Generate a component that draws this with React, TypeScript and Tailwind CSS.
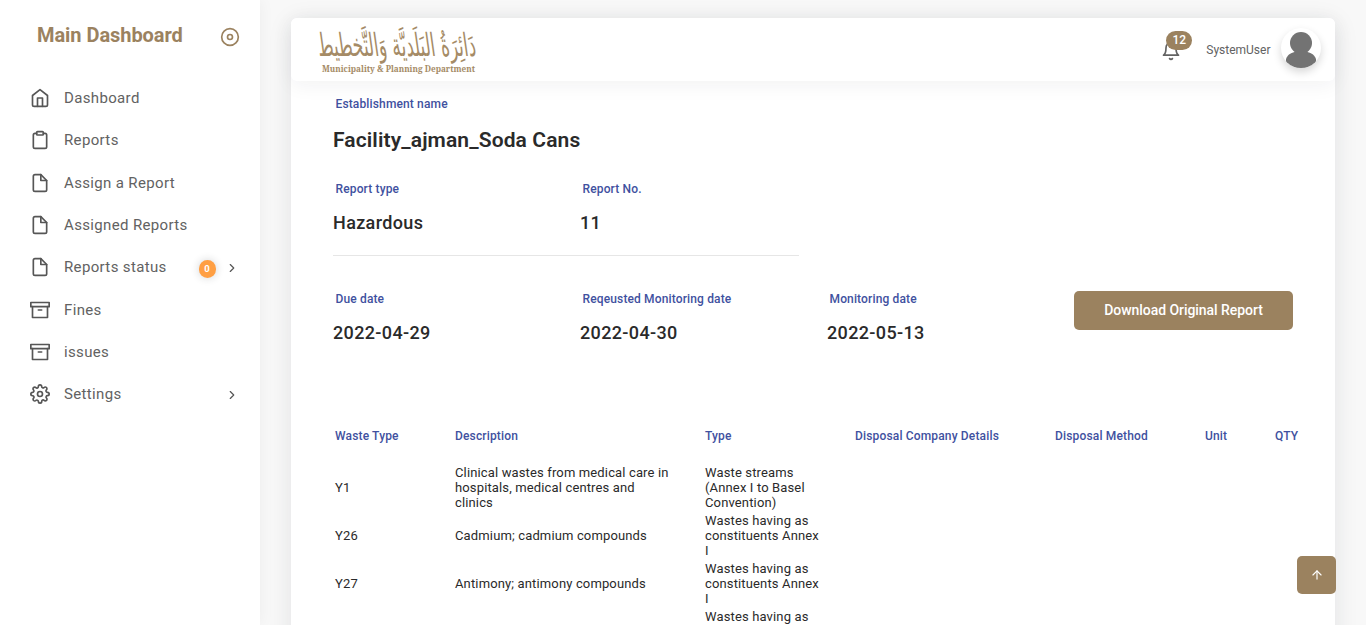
import type { ReactNode } from 'react';
import type { IconType } from 'react-icons';
import { FiArchive, FiArrowUp, FiBell, FiChevronRight, FiClipboard, FiDisc, FiFile, FiHome, FiSettings } from 'react-icons/fi';

type NavItem = { label: string; icon: IconType; badge?: string; expandable?: boolean };

const navItems: NavItem[] = [
  { label: 'Dashboard', icon: FiHome },
  { label: 'Reports', icon: FiClipboard },
  { label: 'Assign a Report', icon: FiFile },
  { label: 'Assigned Reports', icon: FiFile },
  { label: 'Reports status', icon: FiFile, badge: '0', expandable: true },
  { label: 'Fines', icon: FiArchive },
  { label: 'issues', icon: FiArchive },
  { label: 'Settings', icon: FiSettings, expandable: true },
];

const wastes = [
  { code: 'Y1', description: 'Clinical wastes from medical care in hospitals, medical centres and clinics', type: 'Waste streams (Annex I to Basel Convention)' },
  { code: 'Y26', description: 'Cadmium; cadmium compounds', type: 'Wastes having as constituents Annex I' },
  { code: 'Y27', description: 'Antimony; antimony compounds', type: 'Wastes having as constituents Annex I' },
  { code: '', description: '', type: 'Wastes having as constituents Annex I' },
];

const headings = ['Waste Type', 'Description', 'Type', 'Disposal Company Details', 'Disposal Method', 'Unit', 'QTY'];

function Sidebar() {
  return (
    <aside className="w-[260px] shrink-0 bg-white shadow-[0_0_15px_0_rgba(34,41,47,0.05)]">
      <div className="flex h-[77px] items-start justify-between pl-[37px] pr-[20.5px] pt-[23px]">
        <h1 className="text-[20px] font-bold leading-6 tracking-[-0.05px] text-[#9b825f]">Main Dashboard</h1>
        <FiDisc className="mt-1 size-5 text-[#9b825f]" />
      </div>
      <nav className="flex flex-col">
        {navItems.map(({ label, icon: Icon, badge, expandable }) => (
          <a key={label} className="flex h-[42.33px] items-center pl-[30px] pr-[21.5px] text-[#565656]">
            <Icon className="size-5 shrink-0" />
            <span className="ml-[14px] flex-1 text-[15px] leading-5 tracking-[0.35px] text-[#626262]">{label}</span>
            {badge && (
              <span className="mr-[9px] mt-[3px] flex h-[18px] w-[17px] items-center justify-center rounded-full bg-[#ff9f43] text-[9.5px] font-bold text-white shadow-[0_0_8px_rgba(34,41,47,0.2)]">
                {badge}
              </span>
            )}
            {expandable && <FiChevronRight className="mt-px size-[14px]" />}
          </a>
        ))}
      </nav>
    </aside>
  );
}

function Logo() {
  return (
    <svg width="164" height="60" viewBox="0 -2 164 60" fill="#a58b66" role="img" className="overflow-visible">
      <g transform="translate(80 34) skewX(8) scale(1 1.6)">
        <text x="0" y="0" direction="rtl" textAnchor="middle" textLength="158" lengthAdjust="spacingAndGlyphs" fontFamily="DejaVu Sans, sans-serif" fontSize="20">
          دَائِرَةُ البَلَديَّة وَالتَّخطيط
        </text>
      </g>
      <text x="4" y="50" textLength="153" lengthAdjust="spacingAndGlyphs" fontFamily="Noto Serif, DejaVu Serif, serif" fontWeight="700" fontSize="9">
        Municipality &amp; Planning Department
      </text>
    </svg>
  );
}

function Header() {
  return (
    <header className="relative flex h-[63px] items-center justify-between rounded-md bg-white pl-[27px] pr-[14px] shadow-[0_4px_20px_0_rgba(34,41,47,0.06)]">
      <Logo />
      <div className="flex items-center">
        <div className="relative mr-[25px] mt-[2px]">
          <FiBell className="size-5 text-[#626262]" />
          <span className="absolute -top-[10px] left-[5px] flex h-[19px] w-[26px] items-center justify-center rounded-full bg-[#9b825f] text-[12px] font-medium leading-none text-white">12</span>
        </div>
        <span className="mr-[10.5px] text-[12px] text-[#626262]">SystemUser</span>
        <span className="-mt-1 size-10 overflow-hidden rounded-full bg-white shadow-[0_4px_8px_0_rgba(0,0,0,0.16)]">
          <svg viewBox="0 0 40 40" className="size-10" fill="#737373">
            <circle cx="20" cy="15" r="11" />
            <path d="M15 24h10c4 0 8 2 10 7v9H5v-9c2-5 6-7 10-7z" />
          </svg>
        </span>
      </div>
    </header>
  );
}

function Field({ label, children }: { label: string; children: ReactNode }) {
  return (
    <div className="w-[247px] shrink-0">
      <div className="pl-[2.5px] text-[12px] font-medium leading-[18px] tracking-[0.14px] text-[#3f51a0]">{label}</div>
      <div className="mt-[13px] text-[18px] font-medium leading-[24px] tracking-[0.36px] text-[#2a2a2a]">{children}</div>
    </div>
  );
}

export default function App() {
  return (
    <div className="relative flex h-[625px] overflow-hidden bg-[#f8f8f8] font-['Roboto',sans-serif]">
      <Sidebar />
      <main className="flex-1 pl-[31px] pr-[31px] pt-[18px]">
        <div className="h-[700px] w-[1044px] rounded-md bg-white shadow-[0_4px_24px_0_rgba(34,41,47,0.1)]">
          <Header />
          <div className="px-[42px] pt-[14px]">
            <div className="pl-[2.5px] text-[12px] font-medium leading-[18px] tracking-[0.14px] text-[#3f51a0]">Establishment name</div>
            <h2 className="mt-[14px] text-[21px] font-semibold leading-[26px] tracking-[0.12px] text-[#2a2a2a]">Facility_ajman_Soda Cans</h2>
            <div className="mt-[27px] flex h-[76px] w-[466px] border-b border-[#e6e6e6]">
              <Field label="Report type">Hazardous</Field>
              <Field label="Report No.">11</Field>
            </div>
            <div className="mt-[34px] flex items-start">
              <Field label="Due date">2022-04-29</Field>
              <Field label="Reqeusted Monitoring date">2022-04-30</Field>
              <Field label="Monitoring date">2022-05-13</Field>
              <button className="mt-px h-[39px] w-[219px] shrink-0 rounded-[5px] bg-[#9b825f] text-[14px] font-medium tracking-[-0.05px] text-white">
                Download Original Report
              </button>
            </div>
          </div>
          <div className="mt-[82px] pl-[44px]">
            <div className="grid grid-cols-[120px_250px_150px_200px_150px_70px_60px] text-[12px] font-medium leading-[18px] tracking-[0.16px] text-[#3f51a0]">
              {headings.map((heading) => (
                <div key={heading}>{heading}</div>
              ))}
            </div>
            <div className="mt-[18.5px] text-[13px] leading-[15px] tracking-[0.14px] text-[#2a2a2a]">
              {wastes.map((waste, index) => (
                <div key={index} className="grid h-12 grid-cols-[120px_250px_150px] items-center">
                  <div>{waste.code}</div>
                  <div className="pr-[32px]">{waste.description}</div>
                  <div className="pr-[32px]">{waste.type}</div>
                </div>
              ))}
            </div>
          </div>
        </div>
      </main>
      <button className="absolute left-[1297px] top-[556px] flex h-[38px] w-[39px] items-center justify-center rounded-[5px] bg-[#9b825f] text-white">
        <FiArrowUp className="size-[14px]" />
      </button>
    </div>
  );
}
